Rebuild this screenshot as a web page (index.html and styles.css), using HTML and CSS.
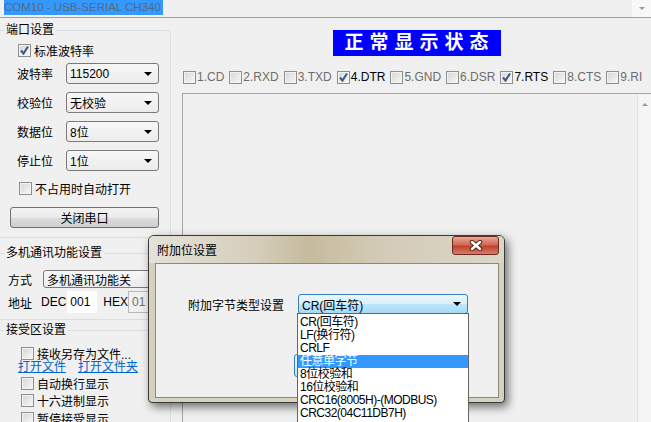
FILE: index.html
```html
<!DOCTYPE html>
<html lang="zh-CN">
<head>
    <meta charset="UTF-8">
    <title>串口调试</title>
    <link rel="stylesheet" href="styles.css">
</head>
<body>
    <div class="topbar">
        <span class="port-name">COM10 - USB-SERIAL CH340</span>
        <span class="drop-btn"><span class="arrow-gray"></span></span>
    </div>

    <div class="main">
        <div class="side">
            <!-- 端口设置 -->
            <div class="group group-port">
                <div class="group-title">端口设置</div>
                <label class="check-row first-check"><span class="cb checked"><svg width="11" height="11" viewBox="0 0 11 11"><path d="M2 5.5 L4.5 8.5 L9 1.5" fill="none" stroke="#3f5488" stroke-width="2"/></svg></span>标准波特率</label>
                <div class="field-row"><span class="field-label">波特率</span><div class="combo">115200</div></div>
                <div class="field-row"><span class="field-label">校验位</span><div class="combo">无校验</div></div>
                <div class="field-row"><span class="field-label">数据位</span><div class="combo">8位</div></div>
                <div class="field-row"><span class="field-label">停止位</span><div class="combo">1位</div></div>
                <label class="check-row auto-open"><span class="cb"></span>不占用时自动打开</label>
                <button class="btn-close">关闭串口</button>
            </div>

            <!-- 多机通讯 -->
            <div class="group group-multi">
                <div class="group-title">多机通讯功能设置</div>
                <div class="mode-row"><span class="mode-label">方式</span><div class="combo combo-wide">多机通讯功能关</div></div>
                <div class="addr-row">
                    <span class="addr-label">地址</span>
                    <span>DEC</span>
                    <span class="addr-input">001</span>
                    <span class="hex-label">HEX</span>
                    <span class="addr-input hex-input">01</span>
                </div>
            </div>

            <!-- 接受区设置 -->
            <div class="group group-recv">
                <div class="group-title">接受区设置</div>
                <label class="check-row recv-first"><span class="cb"></span>接收另存为文件...</label>
                <div class="link-row"><a href="#">打开文件</a><a href="#">打开文件夹</a></div>
                <label class="check-row recv-item"><span class="cb"></span>自动换行显示</label>
                <label class="check-row recv-item"><span class="cb"></span>十六进制显示</label>
                <label class="check-row recv-item last"><span class="cb"></span>暂停接受显示</label>
            </div>
        </div>

        <div class="content">
            <div class="status-title">正常显示状态</div>
            <div class="pins">
                <span class="pin"><span class="cb"></span>1.CD</span>
                <span class="pin"><span class="cb"></span>2.RXD</span>
                <span class="pin"><span class="cb"></span>3.TXD</span>
                <span class="pin on"><span class="cb checked"><svg width="11" height="11" viewBox="0 0 11 11"><path d="M2 5.5 L4.5 8.5 L9 1.5" fill="none" stroke="#3f5488" stroke-width="2"/></svg></span>4.DTR</span>
                <span class="pin"><span class="cb"></span>5.GND</span>
                <span class="pin"><span class="cb"></span>6.DSR</span>
                <span class="pin on"><span class="cb checked"><svg width="11" height="11" viewBox="0 0 11 11"><path d="M2 5.5 L4.5 8.5 L9 1.5" fill="none" stroke="#3f5488" stroke-width="2"/></svg></span>7.RTS</span>
                <span class="pin"><span class="cb"></span>8.CTS</span>
                <span class="pin"><span class="cb"></span>9.RI</span>
            </div>
            <div class="recv-box">
                <div class="scrollbar"><span class="arrow-up"></span></div>
            </div>
        </div>
    </div>

    <!-- 附加位设置 dialog -->
    <div class="dialog">
        <div class="dialog-title">
            <span>附加位设置</span>
            <span class="close-btn">
                <svg width="14" height="11" viewBox="0 0 14 11">
                    <path d="M3 2 L11 9 M11 2 L3 9" stroke="#5b2418" stroke-width="4.5" stroke-linecap="round"/>
                    <path d="M3 2 L11 9 M11 2 L3 9" stroke="#fff" stroke-width="2.5" stroke-linecap="round"/>
                </svg>
            </span>
        </div>
        <div class="dialog-body">
            <div class="type-row">
                <span class="type-label">附加字节类型设置</span>
                <div class="type-combo">CR(回车符)</div>
            </div>
            <button class="ok-btn" aria-label="确定"></button>
        </div>
        <ul class="type-list">
            <li>CR(回车符)</li>
            <li>LF(换行符)</li>
            <li>CRLF</li>
            <li class="active">任意单字节</li>
            <li>8位校验和</li>
            <li>16位校验和</li>
            <li>CRC16(8005H)-(MODBUS)</li>
            <li>CRC32(04C11DB7H)</li>
        </ul>
    </div>
</body>
</html>
```

FILE: styles.css
```css
* {
    box-sizing: border-box;
}

body {
    margin: 0;
    width: 651px;
    height: 422px;
    overflow: hidden;
    position: relative;
    background-color: #f0f0f0;
    font-family: "Liberation Sans", "Noto Sans CJK SC", sans-serif;
    font-size: 12px;
    color: #000;
}

/* top port selector */
.topbar {
    display: flex;
    align-items: flex-start;
    height: 18px;
    border-bottom: 1px solid #a0a0a0;
}

.port-name {
    margin-left: 4px;
    height: 15px;
    line-height: 15px;
    padding-right: 2px;
    background-color: #3399ff;
    color: #56687e;
    font-size: 11.5px;
}

.drop-btn {
    margin-left: auto;
    width: 19px;
    height: 17px;
    background-color: #f8f8f8;
    display: flex;
    align-items: center;
    justify-content: center;
}

.arrow-gray {
    border-left: 3px solid transparent;
    border-right: 3px solid transparent;
    border-top: 3px solid #9a9a9a;
}

.main {
    display: flex;
    height: 404px;
}

/* left column */
.side {
    width: 171px;
    flex-shrink: 0;
}

.group {
    border: 1px solid #d5dfe5;
    border-left: none;
    border-radius: 0 4px 4px 0;
}

.group-title {
    width: fit-content;
    margin: -9px 0 0 4px;
    padding: 0 2px;
    line-height: 16px;
    background-color: #f0f0f0;
}

.group-port {
    margin-top: 12px;
    padding-bottom: 9px;
}

.group-multi {
    margin-top: 15px;
    padding-bottom: 6px;
}

.group-recv {
    margin-top: 10px;
    height: 100px;
}

.check-row {
    display: flex;
    align-items: center;
    gap: 3px;
    height: 16px;
}

.first-check {
    margin-top: 4px;
    padding-left: 18px;
}

.auto-open {
    margin-top: 9px;
    padding-left: 19px;
}

.cb {
    width: 13px;
    height: 13px;
    flex-shrink: 0;
    border: 1px solid #8e8f8f;
    background: linear-gradient(135deg, #d6d6d6, #f8f8f8);
    box-shadow: inset 0 0 0 1px #f2f2f2;
    display: flex;
    align-items: center;
    justify-content: center;
}

.field-row {
    display: flex;
    align-items: center;
    height: 21px;
    margin-top: 8px;
    padding-left: 17px;
}

.first-check + .field-row {
    margin-top: 5px;
}

.field-label {
    width: 49px;
}

.combo {
    position: relative;
    width: 93px;
    height: 21px;
    padding-left: 3px;
    display: flex;
    align-items: center;
    border: 1px solid #7a7a7a;
    border-radius: 3px;
    background: linear-gradient(#f7f7f7, #ececec);
}

.combo::after {
    content: "";
    position: absolute;
    right: 6px;
    top: 50%;
    margin-top: -2px;
    border-left: 4px solid transparent;
    border-right: 4px solid transparent;
    border-top: 4px solid #000;
}

.btn-close {
    display: block;
    margin: 11px 0 0 10px;
    width: 149px;
    height: 21px;
    border: 1px solid #707070;
    border-radius: 3px;
    background: linear-gradient(#f2f2f2, #ebebeb 50%, #dddddd 50%, #cfcfcf);
    font-family: inherit;
    font-size: 12px;
    color: #000;
}

.mode-row {
    display: flex;
    align-items: center;
    height: 18px;
    margin-top: 9px;
    padding-left: 8px;
}

.mode-label {
    width: 35px;
}

.combo-wide {
    width: 122px;
    height: 18px;
}

.addr-row {
    display: flex;
    align-items: center;
    height: 22px;
    margin-top: 3px;
    padding-left: 8px;
}

.addr-label {
    width: 33px;
}

.addr-input {
    width: 30px;
    height: 22px;
    margin-left: 1px;
    padding-left: 3px;
    line-height: 22px;
    background-color: #fff;
}

.hex-label {
    margin-left: 6px;
}

.hex-input {
    width: 40px;
    margin-left: 0;
    border: 1px solid #b8b8b8;
    line-height: 20px;
    background-color: #f0f0f0;
    color: #6d6d6d;
}

.recv-first {
    margin-top: 7px;
    padding-left: 21px;
}

.link-row {
    display: flex;
    gap: 12px;
    height: 14px;
    line-height: 14px;
    margin-top: -1px;
    padding-left: 18px;
}

.link-row a {
    color: #0066cc;
}

.recv-item {
    margin-top: 1px;
    padding-left: 21px;
}

.recv-item.last {
    margin-top: 2px;
}

/* right column */
.content {
    flex: 1;
    display: flex;
    flex-direction: column;
}

.status-title {
    margin: 12px 0 0 162px;
    width: 168px;
    height: 26px;
    line-height: 26px;
    padding-left: 5px;
    text-align: center;
    white-space: nowrap;
    letter-spacing: 6px;
    background-color: #0000ff;
    color: #fff;
    font-size: 19px;
    font-weight: bold;
}

.pins {
    display: flex;
    align-items: center;
    gap: 5px;
    height: 16px;
    margin-top: 13px;
    padding-left: 12px;
    color: #6d6d6d;
}

.pin {
    display: flex;
    align-items: center;
}

.pin .cb {
    margin-right: 1px;
}

.pin.on {
    color: #000;
}

.recv-box {
    flex: 1;
    margin: 8px 0 0 11px;
    border-top: 1px solid #a5a5a5;
    border-left: 1px solid #a5a5a5;
    display: flex;
    justify-content: flex-end;
}

.scrollbar {
    width: 14px;
    padding-top: 9px;
    border-left: 1px solid #e4e4e4;
    background-color: #f5f5f5;
    display: flex;
    justify-content: center;
    align-items: flex-start;
}

.arrow-up {
    border-left: 3px solid transparent;
    border-right: 3px solid transparent;
    border-bottom: 3px solid #9a9a9a;
}

/* dialog */
.dialog {
    position: absolute;
    left: 148px;
    top: 235px;
    width: 357px;
    height: 168px;
    padding: 0 5px 4px 6px;
    border: 1px solid #3a3a3a;
    border-radius: 6px 6px 4px 4px;
    background-color: #d6d0bf;
    box-shadow: 3px 4px 10px rgba(0, 0, 0, 0.55);
}

.dialog-title {
    position: relative;
    display: flex;
    align-items: center;
    height: 27px;
    margin: 0 -5px 0 -6px;
    padding-left: 8px;
    border-radius: 5px 5px 0 0;
    background: linear-gradient(to right, #e4e1d8 0%, #d6cebb 30%, #c6bb9d 45%, #d3cbb7 65%, #dcd6c7 100%);
}

.close-btn {
    position: absolute;
    top: 0;
    right: 5px;
    width: 47px;
    height: 19px;
    border: 1px solid #6a2c22;
    border-radius: 3px;
    background: linear-gradient(#e8a797, #d26a55 45%, #c0422e 55%, #d97c66);
    display: flex;
    align-items: center;
    justify-content: center;
}

.dialog-body {
    position: relative;
    height: 135px;
    padding-top: 30px;
    border: 1px solid #8c887c;
    background-color: #f0f0f0;
}

.type-row {
    display: flex;
    align-items: center;
    height: 20px;
    padding-left: 32px;
}

.type-label {
    width: 110px;
}

.type-combo {
    position: relative;
    width: 170px;
    height: 20px;
    padding-left: 3px;
    display: flex;
    align-items: center;
    border: 1px solid #3c7fb1;
    border-radius: 3px;
    background: linear-gradient(#eaf6fd, #d9f0fc 50%, #bee6fd 50%, #a7d9f5);
}

.type-combo::after {
    content: "";
    position: absolute;
    right: 6px;
    top: 50%;
    margin-top: -2px;
    border-left: 4px solid transparent;
    border-right: 4px solid transparent;
    border-top: 4px solid #000;
}

.ok-btn {
    position: absolute;
    left: 138px;
    top: 90px;
    width: 75px;
    height: 23px;
    border: 1px solid #3c7fb1;
    border-radius: 3px;
    background: linear-gradient(#eaf6fd, #bee6fd);
}

.type-list {
    position: absolute;
    left: 148px;
    top: 77px;
    width: 172px;
    height: 110px;
    margin: 0;
    padding: 2px 0 0;
    list-style: none;
    border: 1px solid #646464;
    background-color: #fff;
    letter-spacing: -0.5px;
}

.type-list li {
    height: 13px;
    line-height: 13px;
    padding-left: 2px;
}

.type-list li.active {
    background-color: #3399ff;
    color: #fff;
}
```
